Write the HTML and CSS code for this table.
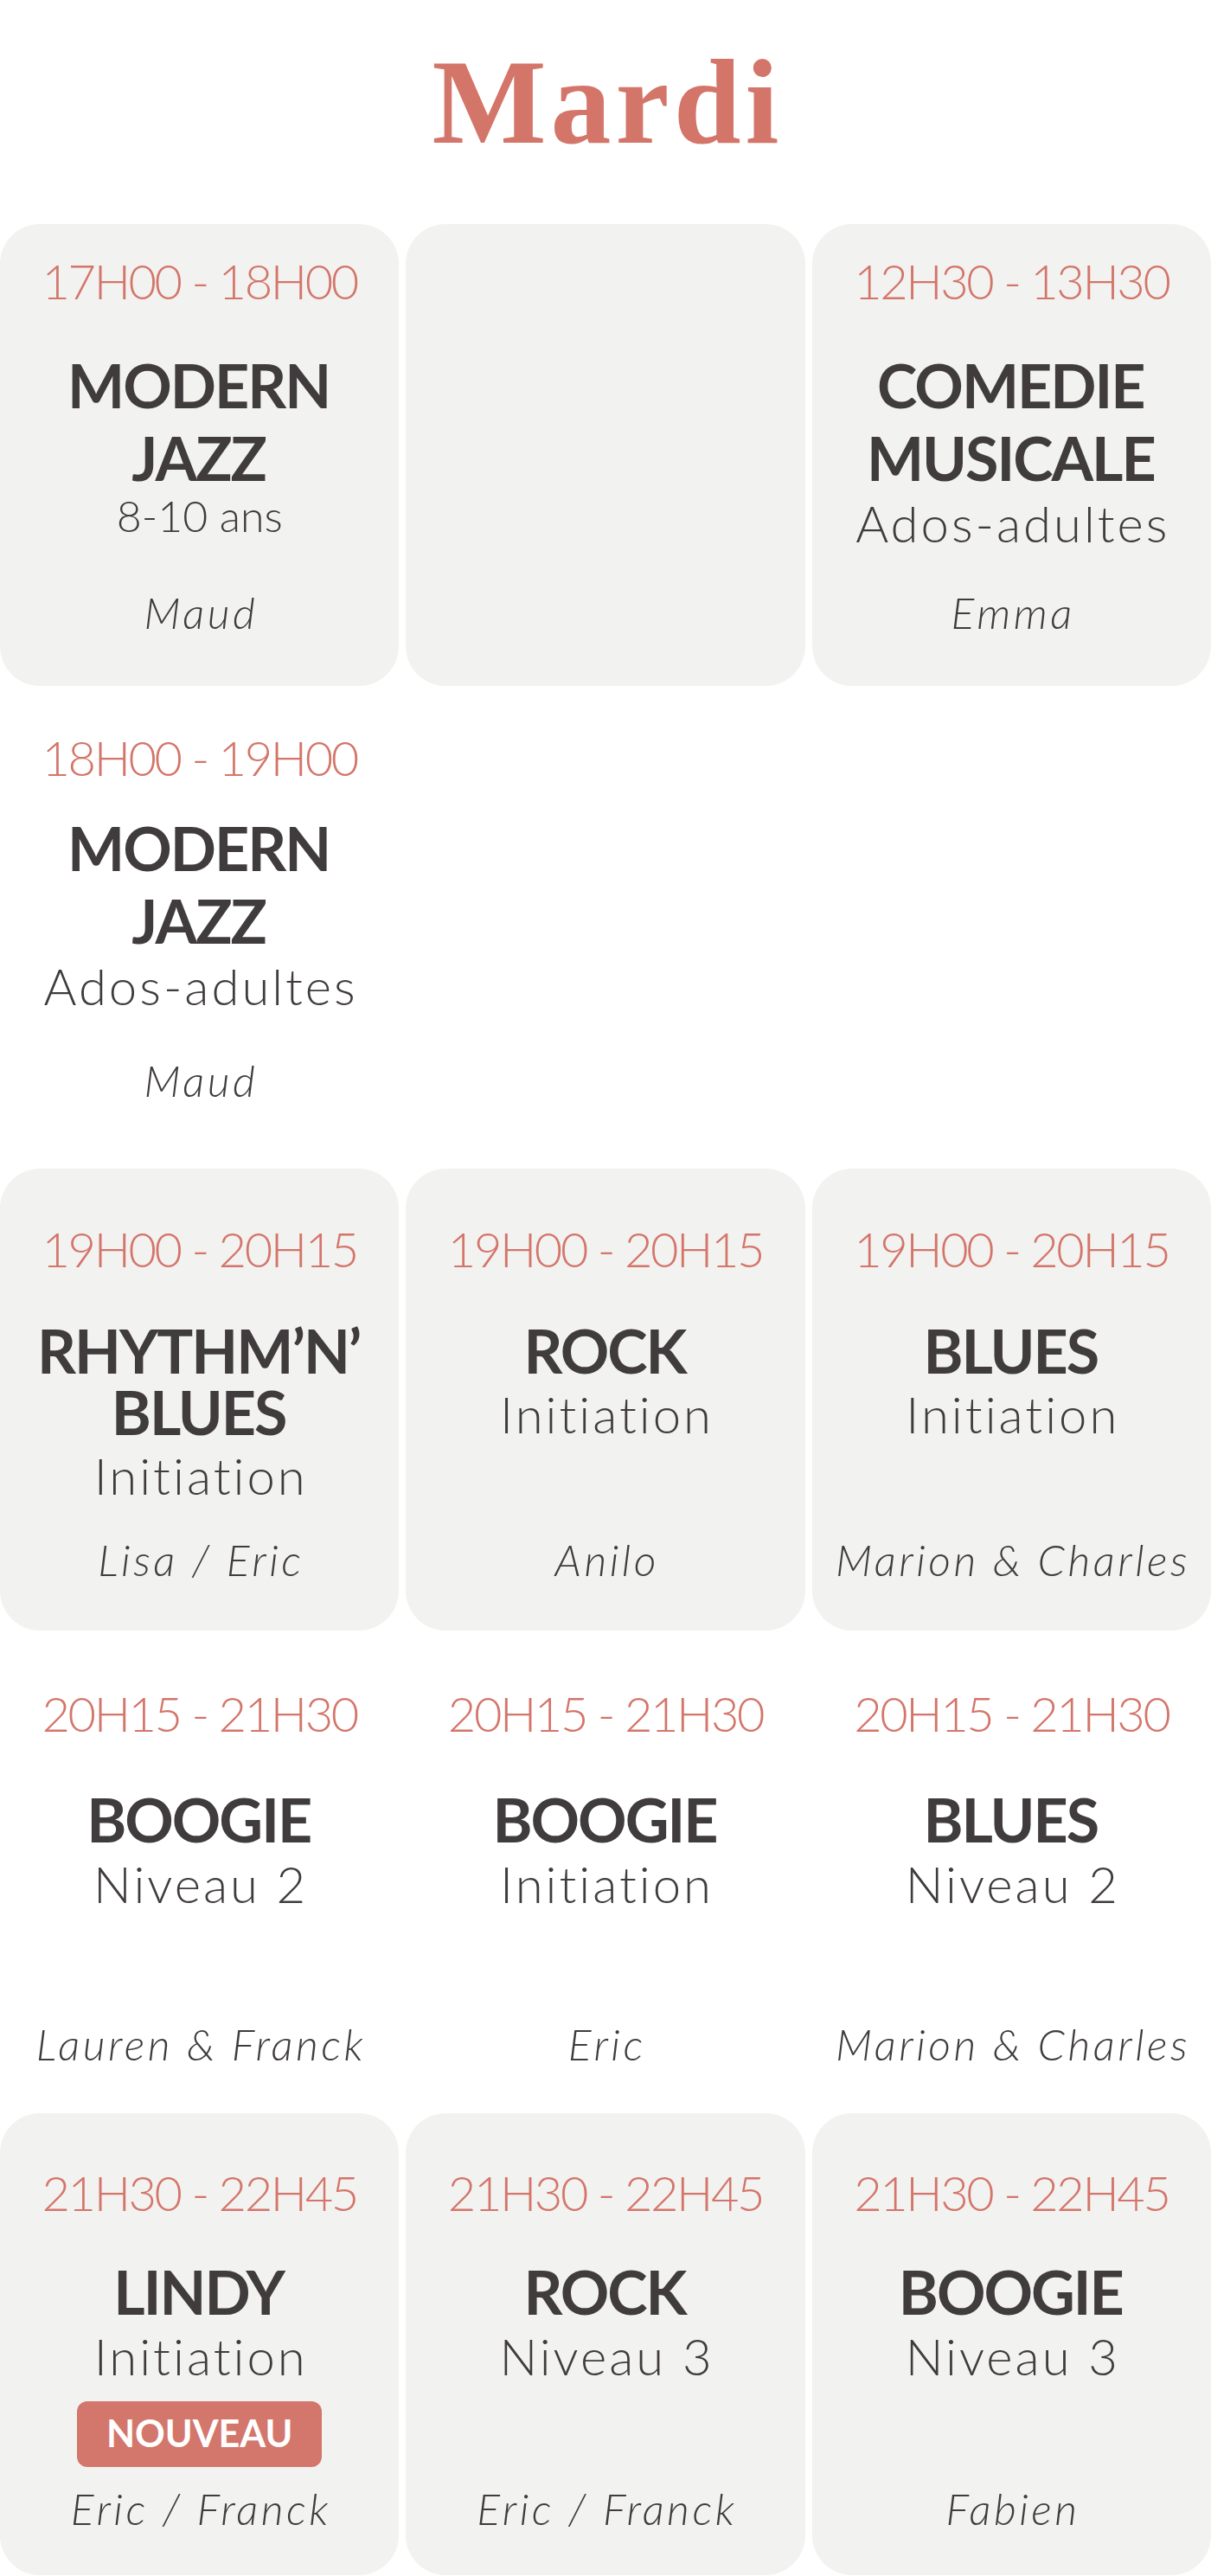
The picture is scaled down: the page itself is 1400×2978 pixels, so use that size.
FILE: index.html
```html
<!DOCTYPE html>
<html lang="fr">
<head>
<meta charset="utf-8">
<title>Mardi</title>
<link rel="stylesheet" href="styles.css">
</head>
<body>
<h1 class="day">Mardi</h1>
<div class="schedule">
  <div class="slot slot-1">
    <div class="card filled">
      <div class="time">17H00 - 18H00</div>
      <div class="title">MODERN<br>JAZZ</div>
      <div class="level level-sm">8-10 ans</div>
      <div class="teacher">Maud</div>
    </div>
    <div class="card filled"></div>
    <div class="card filled">
      <div class="time">12H30 - 13H30</div>
      <div class="title">COMEDIE<br>MUSICALE</div>
      <div class="level">Ados-adultes</div>
      <div class="teacher">Emma</div>
    </div>
  </div>
  <div class="slot slot-2">
    <div class="card">
      <div class="time">18H00 - 19H00</div>
      <div class="title">MODERN<br>JAZZ</div>
      <div class="level">Ados-adultes</div>
      <div class="teacher">Maud</div>
    </div>
    <div class="card"></div>
    <div class="card"></div>
  </div>
  <div class="slot slot-3">
    <div class="card filled">
      <div class="time">19H00 - 20H15</div>
      <div class="title">RHYTHM’N’<br>BLUES</div>
      <div class="level">Initiation</div>
      <div class="teacher">Lisa / Eric</div>
    </div>
    <div class="card filled">
      <div class="time">19H00 - 20H15</div>
      <div class="title">ROCK</div>
      <div class="level">Initiation</div>
      <div class="teacher">Anilo</div>
    </div>
    <div class="card filled">
      <div class="time">19H00 - 20H15</div>
      <div class="title">BLUES</div>
      <div class="level">Initiation</div>
      <div class="teacher">Marion &amp; Charles</div>
    </div>
  </div>
  <div class="slot slot-4">
    <div class="card">
      <div class="time">20H15 - 21H30</div>
      <div class="title">BOOGIE</div>
      <div class="level">Niveau 2</div>
      <div class="teacher">Lauren &amp; Franck</div>
    </div>
    <div class="card">
      <div class="time">20H15 - 21H30</div>
      <div class="title">BOOGIE</div>
      <div class="level">Initiation</div>
      <div class="teacher">Eric</div>
    </div>
    <div class="card">
      <div class="time">20H15 - 21H30</div>
      <div class="title">BLUES</div>
      <div class="level">Niveau 2</div>
      <div class="teacher">Marion &amp; Charles</div>
    </div>
  </div>
  <div class="slot slot-5">
    <div class="card filled">
      <div class="time">21H30 - 22H45</div>
      <div class="title">LINDY</div>
      <div class="level">Initiation</div>
      <div class="badge">NOUVEAU</div>
      <div class="teacher">Eric / Franck</div>
    </div>
    <div class="card filled">
      <div class="time">21H30 - 22H45</div>
      <div class="title">ROCK</div>
      <div class="level">Niveau 3</div>
      <div class="teacher">Eric / Franck</div>
    </div>
    <div class="card filled">
      <div class="time">21H30 - 22H45</div>
      <div class="title">BOOGIE</div>
      <div class="level">Niveau 3</div>
      <div class="teacher">Fabien</div>
    </div>
  </div>
</div>
</body>
</html>
```

FILE: styles.css
```css
html, body {
  margin: 0;
  padding: 0;
  background: #ffffff;
}

body {
  width: 1400px;
  font-family: "Lato", "Open Sans", sans-serif;
  color: #403c3d;
}

.day {
  margin: 0 0 71px;
  padding-top: 48px;
  height: 140px;
  font-family: "Liberation Serif", "Times New Roman", serif;
  font-weight: 700;
  font-size: 140px;
  line-height: 140px;
  letter-spacing: 5px;
  text-indent: 5px;
  text-align: center;
  color: #d4756a;
}

.schedule {
  display: flex;
  flex-direction: column;
  gap: 12px;
}

.slot {
  display: grid;
  grid-template-columns: repeat(3, 1fr);
  column-gap: 8px;
  height: 534px;
}

.slot-1 { --pt: 37.5px; --tgap: 50.6px; --th: 84px; --sgap: 0px; --pb: 60.5px; }
.slot-2 { --pt: 42.5px; --tgap: 34.6px; --th: 84px; --sgap: 0px; --pb: 65.5px; }
.slot-3 { --pt: 64.5px; --tgap: 54.1px; --th: 71px; --sgap: 4.5px; --pb: 57.5px; }
.slot-4 { --pt: 55.5px; --tgap: 59.1px; --th: 71px; --sgap: 5.5px; --pb: 43.5px; }
.slot-5 { --pt: 63.5px; --tgap: 51.1px; --th: 71px; --sgap: 5.5px; --pb: 52.5px; }

.card {
  display: flex;
  flex-direction: column;
  align-items: center;
  text-align: center;
  box-sizing: border-box;
  padding: var(--pt) 0 var(--pb);
  border-radius: 46px;
  min-width: 0;
}

.card.filled {
  background: #f2f2f0;
}

.time {
  font-size: 56px;
  line-height: 56px;
  font-weight: 300;
  letter-spacing: -2.4px;
  color: #d4756a;
  white-space: nowrap;
}

.title {
  margin-top: var(--tgap);
  font-size: 70px;
  line-height: var(--th);
  font-weight: 700;
  letter-spacing: -2px;
  padding-right: 2px;
  white-space: nowrap;
}

.level {
  margin-top: var(--sgap);
  font-size: 58px;
  line-height: 68px;
  font-weight: 300;
  letter-spacing: 3px;
  padding-left: 3px;
  white-space: nowrap;
}

.level.level-sm {
  font-size: 50px;
  line-height: 51px;
  letter-spacing: 0;
  padding-left: 0;
}

.badge {
  margin-top: 18px;
  box-sizing: border-box;
  height: 76px;
  padding: 14.7px 34px 0;
  border-radius: 12px;
  background: #d3766b;
  color: #ffffff;
  font-size: 43px;
  line-height: 43px;
  font-weight: 700;
}

.teacher {
  margin-top: auto;
  font-size: 50px;
  line-height: 50px;
  font-style: italic;
  font-weight: 300;
  letter-spacing: 3.5px;
  padding-left: 3.5px;
  white-space: nowrap;
}
```
